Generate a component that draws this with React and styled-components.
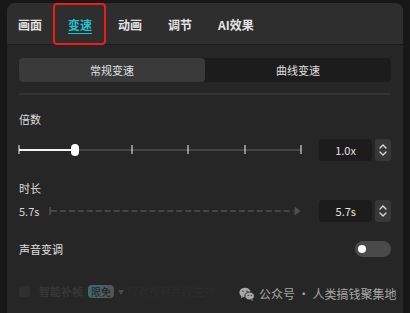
import React, { useState } from "react";
import styled, { createGlobalStyle } from "styled-components";

const GlobalStyle = createGlobalStyle`
  html, body {
    margin: 0;
    padding: 0;
    background: #171717;
  }
  body {
    font-family: "Noto Sans CJK SC", "Noto Sans", sans-serif;
    overflow: hidden;
  }
`;

const tabs = ["画面", "变速", "动画", "调节", "AI效果"];
const ticks = [0, 0.4, 0.6, 0.8, 1];

function Stepper() {
  return (
    <StepBox>
      <svg width="10" height="14" viewBox="0 0 10 14" fill="none">
        <path d="M2 5l3-3 3 3" stroke="#d8d8d8" strokeWidth="1.4" strokeLinecap="round" strokeLinejoin="round" />
        <path d="M2 9l3 3 3-3" stroke="#d8d8d8" strokeWidth="1.4" strokeLinecap="round" strokeLinejoin="round" />
      </svg>
    </StepBox>
  );
}

function WeChatIcon() {
  return (
    <svg width="16" height="14" viewBox="0 0 16 14">
      <ellipse cx="6" cy="5.5" rx="5.6" ry="4.8" fill="#a8a8a8" />
      <path d="M2.4 9l-0.6 2.2 2.4-1.2z" fill="#a8a8a8" />
      <ellipse cx="10.6" cy="9" rx="4.8" ry="4" fill="#a8a8a8" stroke="#262626" strokeWidth="1" />
      <path d="M13.4 12.2l0.6 1.6-2-0.9z" fill="#a8a8a8" />
      <circle cx="4" cy="4.2" r="0.7" fill="#262626" />
      <circle cx="8" cy="4.2" r="0.7" fill="#262626" />
      <circle cx="9.2" cy="8.4" r="0.6" fill="#262626" />
      <circle cx="12.2" cy="8.4" r="0.6" fill="#262626" />
    </svg>
  );
}

export default function App() {
  const [mode, setMode] = useState(0);
  const [active, setActive] = useState(1);
  const value = 0.2;

  return (
    <>
      <GlobalStyle />
      <Panel>
        <Header>
          {tabs.map((t, i) => (
            <Tab key={t} $active={i === active} onClick={() => setActive(i)}>
              <TabText $active={i === active}>{t}</TabText>
              {i === 1 && <Highlight />}
            </Tab>
          ))}
        </Header>
        <Body>
          <Segmented>
            {["常规变速", "曲线变速"].map((s, i) => (
              <Segment key={s} $active={mode === i} onClick={() => setMode(i)}>
                {s}
              </Segment>
            ))}
          </Segmented>
          <Divider />

          <Label $top={15}>倍数</Label>
          <ControlRow $top={11}>
            <Track>
              <Fill style={{ width: `${value * 100}%` }} />
              {ticks.map((t) => (
                <Tick key={t} style={{ left: `${t * 100}%` }} />
              ))}
              <Thumb style={{ left: `${value * 100}%` }} />
            </Track>
            <ValueBox>1.0x</ValueBox>
            <Stepper />
          </ControlRow>

          <Label $top={18}>时长</Label>
          <ControlRow $top={3}>
            <DurationText>5.7s</DurationText>
            <DashLine>
              <svg width="100%" height="12" viewBox="0 0 254 12" preserveAspectRatio="none">
                <line x1="1" y1="2" x2="1" y2="10" stroke="#505050" strokeWidth="1.5" />
                <line x1="2" y1="6" x2="246" y2="6" stroke="#505050" strokeWidth="1.5" strokeDasharray="6 3" />
                <path d="M247 1.5l6 4.5-6 4.5z" fill="#505050" />
              </svg>
            </DashLine>
            <ValueBox>5.7s</ValueBox>
            <Stepper />
          </ControlRow>

          <SwitchRow>
            <RowLabel>声音变调</RowLabel>
            <Toggle>
              <Knob />
            </Toggle>
          </SwitchRow>

          <FadedRow>
            <Check />
            <FadedText>智能补帧</FadedText>
            <Badge>限免</Badge>
            <Caret>▼</Caret>
            <DimText>仅对视频片段生效</DimText>
            <Watermark>
              <WeChatIcon />
              <span>公众号 · 人类搞钱聚集地</span>
            </Watermark>
          </FadedRow>
        </Body>
      </Panel>
    </>
  );
}

const Panel = styled.div`
  margin: 3px 0 0 7px;
  width: 396px;
  height: 320px;
  background: #262626;
  border-radius: 8px 8px 0 0;
  overflow: hidden;
  display: flex;
  flex-direction: column;
`;

const Header = styled.div`
  height: 41px;
  background: #2e2e2e;
  border-bottom: 1px solid #1c1c1c;
  display: flex;
  align-items: stretch;
  padding-left: 11px;
  gap: 26px;
`;

const Tab = styled.div`
  position: relative;
  display: flex;
  align-items: center;
  cursor: pointer;
  padding-top: 2px;
`;

const TabText = styled.span`
  font-size: 12px;
  font-weight: 700;
  color: ${(p) => (p.$active ? "#22c3cc" : "#e4e4e4")};
  text-decoration: ${(p) => (p.$active ? "underline" : "none")};
  text-underline-offset: 3px;
`;

const Highlight = styled.span`
  position: absolute;
  left: -15px;
  right: -14px;
  top: 0;
  bottom: -1px;
  border: 2px solid #ec1c1c;
  border-radius: 4px;
  box-sizing: border-box;
  pointer-events: none;
`;

const Body = styled.div`
  padding: 13px 12px 0;
  display: flex;
  flex-direction: column;
`;

const Segmented = styled.div`
  display: flex;
  height: 24px;
  background: #1c1c1c;
  border-radius: 4px;
`;

const Segment = styled.div`
  flex: 1;
  display: flex;
  align-items: center;
  justify-content: center;
  font-size: 11px;
  color: #e0e0e0;
  border-radius: 4px;
  background: ${(p) => (p.$active ? "#3a3a3a" : "transparent")};
  cursor: pointer;
`;

const Divider = styled.div`
  margin-top: 11px;
  height: 2px;
  background: #333;
`;

const Label = styled.div`
  margin-top: ${(p) => p.$top}px;
  font-size: 11px;
  line-height: 18px;
  color: #dcdcdc;
`;

const ControlRow = styled.div`
  margin-top: ${(p) => p.$top}px;
  height: 22px;
  display: flex;
  align-items: center;
`;

const Track = styled.div`
  position: relative;
  width: 282px;
  height: 2px;
  background: #454545;
  margin-right: 18px;
`;

const Fill = styled.div`
  height: 100%;
  background: #f2f2f2;
`;

const Tick = styled.div`
  position: absolute;
  top: -4px;
  width: 1px;
  height: 9px;
  background: #f2f2f2;
  transform: translateX(-0.5px);
`;

const Thumb = styled.div`
  position: absolute;
  top: -5px;
  width: 8px;
  height: 12px;
  background: #fff;
  border-radius: 4px;
  transform: translateX(-4px);
`;

const ValueBox = styled.div`
  width: 53px;
  height: 22px;
  background: #1c1c1c;
  border-radius: 4px;
  display: flex;
  align-items: center;
  justify-content: center;
  font-size: 11px;
  color: #e2e2e2;
`;

const StepBox = styled.div`
  margin-left: 3px;
  width: 16px;
  height: 22px;
  background: #383838;
  border-radius: 3px;
  display: flex;
  align-items: center;
  justify-content: center;
`;

const DurationText = styled.div`
  width: 30px;
  font-size: 11px;
  color: #d6d6d6;
`;

const DashLine = styled.div`
  width: 254px;
  height: 12px;
  margin-right: 18px;
  display: flex;
`;

const SwitchRow = styled.div`
  margin-top: 19px;
  height: 16px;
  display: flex;
  align-items: center;
  justify-content: space-between;
`;

const RowLabel = styled.div`
  font-size: 11px;
  color: #e0e0e0;
`;

const Toggle = styled.div`
  width: 36px;
  height: 16px;
  border-radius: 8px;
  background: #4a4a4a;
  display: flex;
  align-items: center;
  padding-left: 3px;
  box-sizing: border-box;
`;

const Knob = styled.div`
  width: 8px;
  height: 8px;
  border-radius: 50%;
  background: #fff;
`;

const FadedRow = styled.div`
  position: relative;
  margin-top: 26px;
  height: 16px;
  display: flex;
  align-items: center;
`;

const Check = styled.div`
  width: 11px;
  height: 11px;
  border-radius: 2px;
  background: #2e2e2e;
  margin-right: 9px;
`;

const FadedText = styled.div`
  font-size: 11px;
  font-weight: 700;
  color: #363636;
  margin-right: 5px;
`;

const Badge = styled.div`
  font-size: 10px;
  line-height: 13px;
  padding: 0 3px;
  border-radius: 4px;
  color: #1e1e1e;
  background: linear-gradient(90deg, #3f6a6d, #555);
  margin-right: 4px;
`;

const Caret = styled.div`
  font-size: 6px;
  color: #4a4a4a;
  margin-right: 3px;
`;

const DimText = styled.div`
  font-size: 11px;
  color: #2d2d2d;
`;

const Watermark = styled.div`
  position: absolute;
  left: 218px;
  top: 2px;
  display: flex;
  align-items: center;
  gap: 4px;
  font-size: 12px;
  color: #a6a6a6;
  background: #262626;
  padding-left: 2px;
  white-space: nowrap;
`;
